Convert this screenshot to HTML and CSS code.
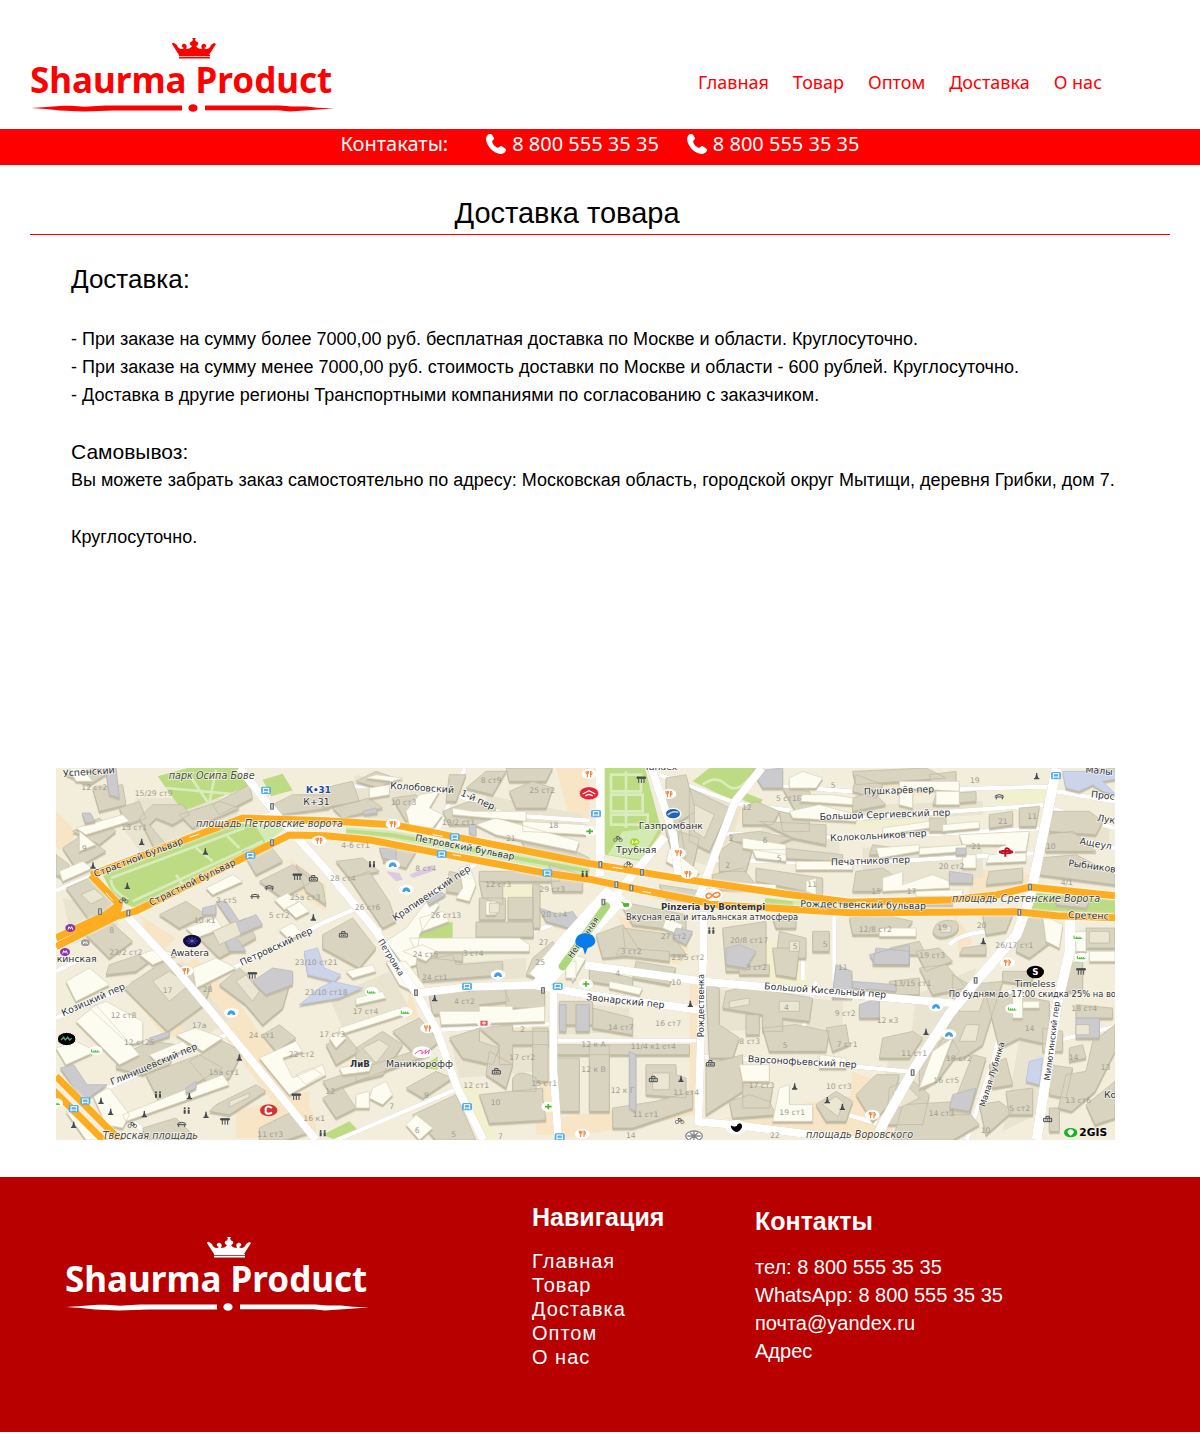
FILE: index.html
```html
<!DOCTYPE html>
<html lang="ru">
<head>
<meta charset="utf-8">
<meta name="viewport" content="width=device-width, initial-scale=1">
<title>Shaurma Product — Доставка товара</title>
<link rel="stylesheet" href="styles.css">
</head>
<body>
<svg class="sprite" aria-hidden="true">
  <symbol id="logo" viewBox="0 0 310 76">
    <g fill="currentColor">
      <path d="M142 6a1.500 1.500 0 0 1 2-1l3 2c1 4 5 5 7 3-4-1-2-5 1-4 2 1 2 3 1 5 3 0 5-1 6-3-3-1-3-4 0-4.500l1-2-1-1 2-1 2 1-1 1 1 2c3 .5 3 3.500 0 4.500 1 2 3 3 6 3-1-2-1-4 1-5 3-1 5 3 1 4 2 2 6 1 7-3l3-2 2 1-7 11h-30z"/>
      <path d="M149 17h31v1.200h-31zM149 19h31v1.500h-31z"/>
      <text class="logo-text" x="0" y="55">Shaurma Product</text>
      <path d="M1 70l12-.8 20-1.400h8l14 1 20-1.200h77v5H84l-30 1-24-1.200-14-1.500z"/>
      <path d="M175 67.500h75l12 1h14l12 1.300 16 .7-16 .9-10 .8-18 1.200-12-1.100h-73z"/>
      <ellipse cx="163" cy="70" rx="4.600" ry="3.800"/>
    </g>
  </symbol>
  <symbol id="phone" viewBox="0 0 20 20">
    <path fill="#fff" d="M3 0C1 .8-.5 4 .3 7c1.500 6 6.500 11 11.700 12.500 3 .8 6 .5 7.500-2 .7-1.200.7-2.200-.3-3l-3-2c-1-.7-2-.5-2.700.3-.7.900-1.500 1.200-2.500.6-2-1-4-3-4.700-5-.3-1 0-1.800.8-2.300 1-.7 1.200-1.700.6-2.700L6 .8C5.300-.2 4-.3 3 0z"/>
  </symbol>
</svg>

<header class="header">
  <a class="logo" href="#" aria-label="Shaurma Product"><svg><use href="#logo"/></svg></a>
  <nav class="menu">
    <a href="#">Главная</a>
    <a href="#">Товар</a>
    <a href="#">Оптом</a>
    <a href="#">Доставка</a>
    <a href="#">О нас</a>
  </nav>
</header>

<div class="bar">
  <span class="bar-label">Контакаты:</span>
  <a href="tel:88005553535"><svg><use href="#phone"/></svg>8 800 555 35 35</a>
  <a href="tel:88005553535"><svg><use href="#phone"/></svg>8 800 555 35 35</a>
</div>

<main>
  <h1 class="title">Доставка товара</h1>
  <section class="delivery">
    <h2>Доставка:</h2>
    <p>- При заказе на сумму более 7000,00 руб. бесплатная доставка по Москве и области. Круглосуточно.<br>
    - При заказе на сумму менее 7000,00 руб. стоимость доставки по Москве и области - 600 рублей. Круглосуточно.<br>
    - Доставка в другие регионы Транспортными компаниями по согласованию с заказчиком.</p>
    <h3>Самовывоз:</h3>
    <p>Вы можете забрать заказ самостоятельно по адресу: Московская область, городской округ Мытищи, деревня Грибки, дом 7.</p>
    <p>Круглосуточно.</p>
  </section>

  <svg class="map" viewBox="0 0 3177 1116" role="img" aria-label="Карта проезда">
    <defs>
      <g id="bus"><rect x="-15" y="-11" width="30" height="22" rx="5" fill="#55aee8"/><rect x="-8" y="-6" width="16" height="10" fill="none" stroke="#fff" stroke-width="3"/><path d="M-8 5v3M8 5v3" stroke="#fff" stroke-width="4"/></g>
      <g id="food"><ellipse rx="22" ry="15" fill="#fff"/><path d="M-9-9v7q4 4 8 0v-7M-5-9V10M5 10V-9q5 3 4 10H5" fill="none" stroke="#f47a2c" stroke-width="3"/></g>
      <g id="tree"><path d="M-8 10h16v-4H5L2-4V-9h-4v5L-5 6h-3z" fill="#444a50"/></g>
      <g id="light"><rect x="-6" y="-10" width="12" height="20" rx="2" fill="#777"/><path d="M0-7V7" stroke="#ddd" stroke-width="4"/></g>
      <g id="arch"><path d="M-13-8h26v4h-26zM-8-3v13M0-3v13M8-3v13" fill="#444a50" stroke="#444a50" stroke-width="3"/></g>
      <g id="house"><path d="M-12 8V-2h24V8zM-5-3V-8H5v5M-5 1v4M0 1v4M5 1v4" fill="none" stroke="#444a50" stroke-width="3"/></g>
      <g id="lime"><ellipse rx="21" ry="14" fill="#fff"/><path d="M-12-4v8H12M-5-1V4M0-1V4M6-1V4" fill="none" stroke="#3fbe26" stroke-width="3"/></g>
      <g id="hotel"><ellipse rx="22" ry="15" fill="#fff"/><path d="M-12 7q0-12 12-14 12 2 12 14H5q-5-8-10 0z" fill="#3f9fe6"/></g>
      <g id="cross"><ellipse rx="21" ry="15" fill="#fff"/><path d="M-10 0h20M0-8V8" stroke="#44bd23" stroke-width="5"/></g>
      <g id="bike"><path d="M-5-6h8l4 9M-5-6l5 9 6-6" fill="none" stroke="#555" stroke-width="3"/><circle cx="-8" cy="4" r="5" fill="none" stroke="#555" stroke-width="2"/><circle cx="8" cy="4" r="5" fill="none" stroke="#555" stroke-width="2"/></g>
      <g id="people"><path d="M-9 9V-3h6V9zM3 9V-3h6V9z" fill="#444a50"/><circle cx="-6" cy="-7" r="3" fill="#444a50"/><circle cx="6" cy="-7" r="3" fill="#444a50"/></g>
      <g id="bench"><path d="M-12-4Q0-10 12-4M-14 0h28M-9 0v7M9 0v7" fill="none" stroke="#444a50" stroke-width="3"/></g>
    </defs>
    <rect width="3177" height="1116" fill="#f2eedb"/>

    <!-- courtyards -->
    <g fill="#f8e5c6">
      <path d="M0 130l60 60-25 60-35-10zM700 270l110 80v80l-80-50zM250 440l110 70-60 60zM360 600l60-30 120 120 240 360 0 66-60-20-180-240zM200 650l120 150 100 20-50-60-120-100z"/>
      <path d="M1500 0h100v150h-60zM1720 70h60l40 130-20 70zM2030 100l30 20-90 270-30-30zM1600 340l340 50-30 30-160-40zM1680 440l120 40 100 60-30 50-120-30zM1260 690h120v40h-120zM1150 790h340v-30h-340z"/>
      <path d="M1060 660l30 90-40 10zM1480 700h20v400h-60v-50zM1500 1050l420-60v50l-420 76zM2000 1050l400-70 120 60-20 76h-120zM2390 910l100 40-60 90-50-40zM2740 300l180 20v50l-180 30zM2690 430l60 90-40 40z"/>
      <path d="M2400 20h200v60h-200zM1900 650h40v380h-40zM540 1030l220-60v90l-60 50h-160z"/>
    </g>
    <g fill="#f3f0cf"><path d="M2380 120l200-10v60l-200 10zM2840 60h140v60h-140zM1280 330h180v150h-180zM2130 520h120v140h-120zM1220 960l50-10 60 166h-40z"/></g>

    <!-- open yards between the blocks -->
    <g fill="#e9e4d0">
      <path d="M240 90l260 0 60 60-300 110-60-80zM20 390l110 20 60 60-140 60zM900 20l240 60-40 100-240-40zM1290 80l290 60v60l-280-40zM1860 60l130 10 60 60-60 170-130-30zM2120 170l230 30v90l-250-40zM2420 110l360-10v40l-360 20zM2420 240l360-10v100l-360 20zM2960 150l200 30v60l-210-20z"/>
      <path d="M220 640l160-60 140 180-100 60zM820 690l180-80 60 110-200 60zM1120 590l290-20v60l-290 20zM1180 800l280-20v130l-250 20zM1520 700l200 20v70l-200 10zM1960 660l400 40v80l-400 10zM2580 680l180-80-40 190-160 60zM2500 860l160-20-80 180-120 20zM2900 760l100 20-40 250-120 60z"/>
    </g>

    <!-- parks -->
    <g fill="#bddb83">
      <path d="M305 25l90-25h160l35 50-210 80zM620 35l60-18 30 50-65 18zM140 320L545 165l105 10-15 50-400 195-60-30z"/>
      <path d="M1647 0h120l50 190-60 90-110-20zM1910 40l50-40h145l-80 95zM2070 75l50 20-12 20-50-20zM1040 515l70-40 80-13v55zM1095 900l50-35v40zM2917 372l260 25v40l-260-10zM2127 390l90 10v22h-90zM800 1100l80-40 30 30-70 26z"/>
    </g>
    <g fill="#d3eab2">
      <path d="M590 160l100 20-60 45zM1700 190l110-10-55 95-100-15zM2210 397l370 5v22h-370zM870 177l140 12 590 108v30l-590-112-140-10z"/>
    </g>
    <path d="M870 190l140 12 590 108" fill="none" stroke="#bddb83" stroke-width="12"/>
    <g fill="none" stroke="#d9ecbb" stroke-width="8">
      <path d="M165 330l400-150M230 400L620 220M165 335q0 30 50 60M420 240l50 40M510 200l40 40M360 320l20 30M400 20l60 90M330 60l220 20M480 5l-20 100"/>
      <path d="M1665 20h90v50h-90zM1665 80h95v50h-95zM1665 140h110v30h-110zM1710 10v170M1940 50q40-30 70 0t70-20"/>
    </g>

    <!-- side streets -->
    <g class="road thin">
      <path d="M2117 51l280 20 585-15M2037 106l355 45 570-40M1997 196l395 15 560-30M1977 276l415 10 540-30M2980 66l197 35M2970 116l207 65M2950 191l227 50M2940 276l237 40"/>
      <path d="M0 368l110-46M420 656l380-191 102-44M0 751l350-155M120 976l400-180M962 491l300-205M792 55h200l180 15 180 71 250 17M1227 0l-85 191M1500 818h427M1142 786l350-20M1937 866l350 20 275 25M2862 666l-50 210-80 240M1210 960l-400 170M1400 500l150-50"/>
      <path d="M600 150l80-20M0 610l60-30M2240 546v90M2335 430v210M3042 560h135M1810 20l230 85M300 1116l-180-140M2680 530q40-40 140-40M2462 1066l-100-30M2280 640l-60 220M3010 816l167-40"/>
    </g>

    <!-- buildings -->
    <g class="b">
      <path d="M30 360l80-35 90 70-100 60zM20 240l60-40 70 50-90 50zM50 190l80-40 50 40-50 40zM110 60l90-10 10 60-80 20zM250 150l40-40h90l20 30-50 30-50-20-20 20 50 60-30 20zM370 140l120-40 60 20-140 60zM470 110l110-60 10 40-100 50zM310 440l80-40 60 40-80 40zM430 510l140-60 30 60-110 60zM560 250l80-20 40 50-80 40zM650 110l60-30h110v40l-150 20zM30 20l90-20h60l-80 50zM720 290l80 60 10 60-60-40zM0 260l40 30-20 40-20-10zM130 430l100 90-70 50-90-90zM190 120l60-20 20 50-60 20zM610 340l100-50 60 50-90 50z"/>
      <path d="M800 60l90-20 20 60-110 20zM900 40l60-30 60 20-50 30zM1010 90l70-10 30 50-60 30zM830 120l110-30 40 30-120 30zM1160 130l80-30 80 20-20 50h-120zM1230 60l60-50h60l-40 70zM1360 70l70-30 60 20-20 60h-90zM1350 0h140l-20 40h-110zM1390 200l150 40 60 30v20l-190-40zM1180 20h50l-30 80h-30zM840 280l80-10 50 40-90 20zM880 330l60-20 60 90 20 60-40 20zM1000 240l80 10-30 50-70-20zM1270 310h240v30h-240zM1270 340l70 10v60l-60-20zM1270 390h78v65h-78zM1356 388h76v66h-76zM1260 462h172v45h-172zM1430 350h22v130h-22zM1480 290l100 30v50h-90zM800 500l90-50 70 90-50 60-110-60zM1180 310l50 10v60l-60-10z"/>
      <path d="M1830 30l60-10 30 110-50 30 20 110-30 20-30-100zM1900 60l120 60-60 130-60-30zM1870 190l60 20-20 90-50-20zM1990 250l40-30 60 20-20 70h-80zM2060 120l40-20 70 30-20 40h-90zM2180 60l80 10 30 70-60 10zM2020 200l90-10 100 20-50 20-130-10zM2110 160l200 10v60l-100-20zM2170 130l90 20v40h-80zM2180 240l180 20v20l-200-10zM2100 300l200 30v50l-200-40zM1970 320l90-20 40 50h-130zM1690 400l200 40v50l-160-20zM1700 480l150 20 40 60-180 0zM1620 500l80-30 60 90-120 10zM2000 480l130-20v150h-120zM2150 450l70-10v40h-60zM2170 490l80 20v60h-90zM2270 490h50v60h-50zM1810 350l130 20v30l-110-10z"/>
      <path d="M2390 10l220-10 60 30-270 20zM2390 90l60-20 40 40-100 20zM2620 20l80-10v40l-70 10zM2640 80l120-10v30l-130 10zM2800 140l70-10v40l-70 10zM2890 120l60-5-10 60h-50zM2980 130l120 0 40 30-20 40-140-10zM2960 200l90-10 70 60-150 0zM2950 270l110-10 117 60v30l-227-30zM2400 20l80 30-20 40-70-20zM2450 230l70 10-10 20-70 0zM2400 310l80-10 60 40-80 30h-70zM2620 150l50 0v40h-50zM2800 310l100-10v40l-110 10zM2380 450l100-10 90 20-30 40-150 0zM2500 540l90-20 20 40h-100zM2780 440l90 0-20 50-60 10zM2900 460l50-20 50 70-80 60-40-20zM2640 470q20-20 60-10 20 20-10 40-50 20-60-10zM2720 540l70-10v30h-80zM2600 370l90 20v20h-90zM3090 0h87v30l-80-10zM3090 480h87v60h-87zM3000 390l100 10-10 20-90-10z"/>
      <path d="M205 660l130-90 130 80-20 60-110 80zM150 620l90-10 40-30-30-20-90 30zM190 860l100-40 70 10-20 60-80 30-80-20zM270 920l160-60 70 40-140 80-50 20zM400 880l100-60 60 30-40 80-60 20zM490 650l60-50 60 50 90 0-20 70-60 50-50-60zM620 800l50-30 50 40-60 40zM480 1010l120-60 30 20-110 70-60-10zM260 1080l100-30 60 60-150 6zM610 1080l100-50 60 60-80 26h-80zM440 590l40-10 0 40-40 10z"/>
      <path d="M900 840l80-50 60 40-60 90-80 20zM1010 790l80-40 60 70-60 50zM810 830l60-30 40 50-70 40zM800 940l300-100 20 20-300 110zM800 990l60-30 40 60-60 30zM1050 960l90-50 50 20-90 60zM1070 1040l130-60 60 136h-120zM1080 580l110-20 10 30 140-10v40l-250 20zM1120 680l60-10 70 0 90-20 20 50-90 10 10 20-150 10zM1350 660h116v60h-116zM1180 810l90-30v40l60 20-20 50-90-20zM1270 780l100-10v20h110v40l-110 0v60l-40 0v-60zM1300 850l70 40-20 70-60-40zM1430 780h46v160l-46 0zM1270 980l190-20v30l10 66-170 10zM1370 930q20-30 70 0v40h-70zM1120 570l60-30h40v40zM1430 570l60-50 20 30-70 80-30-10z"/>
      <path d="M1510 700h100v70h-100zM1600 600l130 30v30l-130-20zM1610 720l120 30v50l-120-20zM1740 580l120 20-20 50-110-20zM1500 830h400v30h-400zM1500 870h70v160h-70zM1600 830h60v200l-60 0zM1770 890l90 0v30l30 10v60l-120-10zM1800 1000l110-30v50l-180 60h-60v-60zM1950 890l110-30v110l-110 70zM2010 670l90-20 50 20 120 20-10 70-80-10v40h-60v-50l-120-20zM1950 650l40 10v110l60 40-20 60-70 0zM2070 740l40 0v60h-40zM2120 780l100-10 100 20-10 60-170 0zM2020 1000l60-20 60 20 20 40-130 10zM2060 950l90 10-10 60h-80zM2050 600l90-10v30h-90zM2150 540l80 0-10 90-60-10zM2310 780l60-10 10 60-50 20zM2280 1010l60-40 50 30-20 60-60 0zM1690 540l150 10v30l-160-20z"/>
      <path d="M2580 550l70-10 40 40-80 30zM2590 600l80-10 60 70-100 20zM2500 640l90-10v50l-90 0zM2690 620l50 30 100-10-60 190-60 40-90 0 60-120zM2790 680l80 0 110 20v130l-90-20-60 30zM2480 810l90-20 30 20-40 60-90 0zM2590 860l90-60 30 50-60 80-60 40zM2500 960l60-30 60 50-20 90h-110zM2540 1010l170-10 60 70-80 46h-180zM2750 860l40 10-50 170-60 0zM2800 890l50-20 20 80-60 10zM2850 970l80-10v80h-70zM2980 890l70 10-20 90-50-10zM2960 780l60 10v60h-60zM3020 590l60-10v90h-60zM3060 710l110 10v30h-110zM3030 920l60-10 20-90 67-50v80l-60 120-70 60-40-10zM3090 1010l87-70v110l-60 20zM2770 1010l60-10 40 30-80 70zM3040 840l40-10 10 40-50 10zM2400 980l60-60 70 0-20 80-60 60zM2980 1020l30 0v70h-30zM2840 610l100 0-20 40-80-10z"/>
    </g>
    <g class="b l">
      <path d="M60 180l140-40 20 20-130 40zM10 310l70-30 30 20-90 40zM450 360l80-40 30 20-90 40zM390 480l90-30 20 30-80 30zM655 395l40-20 30 30-40 20zM690 420l40-20 30 30-40 20zM670 485l40-20 30 30-40 20zM70 190l50 40-50 20zM40 0l40 0 30 40-50 0z"/>
      <path d="M940 60l60-10v30l-60 10zM1050 130l40-50 60-10-30 50 40 20-30 40-70-10zM1190 120l60 10 160 0v30l-220-20zM1260 170l60-20 250 70-10 30-240-50zM1400 160l190 10v30l-190-10zM960 20l80 10-30 10-80-10zM990 520l60-40 70-90 30 20-60 90-10 90-30 10zM1060 510h330l30 20v20h-340zM1090 450l70-20 20 30-80 30zM1210 300l30-10 20 60-20 50-40-10 20-30z"/>
      <path d="M2200 30l40-20 60 20-20 30h-80zM2240 80l90 0 60 10v20l-160-10zM2200 130l90-20 110 30v20l-190-10zM2060 210l130 20v30l-130-20zM2090 245l100 0v35l-90-10zM2220 280h170v25h-170zM1960 340l200 10 0 20-200-10zM1840 240l90 70-10 20-90-50zM2250 340l30-10v50l-30-10z"/>
      <path d="M2530 40l180 0v30l-180-10zM2640 70l70 0v40h-70zM2530 70l40 0v50l-40-10zM2480 180l140-20v20l-140 20zM2660 170l110-10v20l-110 10zM2710 200l210-10-10 60-60 0v-20l-130 0zM2590 240l140-10v20l-140 10zM2460 240l130-10v20l-120 20zM2720 260h40v40h-40zM2800 260l110-5v25l-120 5zM2480 330l60-20 0 40 90-30 50 20v20l-200 10zM2580 370l140-5v20h-140zM2470 480l110 0v25h-110zM2960 440l60 30-10 70-40-20zM3060 490h30v60h-30z"/>
      <path d="M30 640l70-40 60 50-100 50zM60 760l60-50 130 150-60 30zM100 720l50-20 110 60v60l-40 10zM410 600l70-30 60 30-120 60zM250 560l60-20 50 20-70 30zM360 800l60-20 80 30-60 40zM280 860l100-40 20 20-100 40zM110 980l50-20 60 80-20 40-50-10zM200 1040l300-120 20 30-310 110zM0 840l60-20 60 30-90 40zM610 870l110-50 20 30-60 20 30 60 90-40 10 30-110 60zM720 920l50-20 30 20-50 30zM30 1030l60 30 60 56h-60z"/>
      <path d="M870 610l80-20 10 20-70 20zM900 690l80-20 10 20-90 20zM850 780l180-60 10 20-190 60zM820 810l30-20 20 20-30 30zM850 900l100-20-10 30-80 10zM950 960l40-20 20 40-30 30-40-20zM900 980l40-10v50h-40zM1050 1070l30-30 50 40-40 36zM990 580l60 0 60 80-20 20-60-30zM1040 550l70 30 30-30-40-20zM1150 730l120 0v-15h60l40 0v10l96-10v45l-310 10zM1290 400l30 0v40h-30zM1530 580l20-20 40 10-40 70z"/>
      <path d="M1530 580h30v50h-30zM1660 640l100 20-10 20-90-20zM2050 890l90 0v50h-80zM2170 960l30-10 0 60h70v50l-120 0zM2290 860l80 10v30l-80 0zM1830 450l50 20-10 30-50-20zM2870 660l30 0v90h-30zM2900 700h50v20h-50zM2630 850l60-40-50 130-50 20zM3100 550h77v30h-77z"/>
    </g>
    <g class="b g">
      <path d="M78 135l25 0 15 25-30 5zM150 10l30-10 10 90-30-10zM480 400l30 0 40 60 50-20 20 30-70 30zM440 420l40-10v30h-40zM500 500l30-10 40 60h-50zM13 900l40-10 40 60 60 0-70 50zM590 640l60-40 60 10v40l-80 30zM280 810l60-20v15l-60 20zM390 960l30-20v20l-30 15z"/>
      <path d="M920 130l40-10 5 15-40 5zM970 240h50v40l-40-10zM1110 390l40-20 20 10-50 30zM1240 170l20 0v35l-20-10zM1450 420l60 20 40-10 20 30-30 20-70-20zM1860 480l50 10-20 40-40-20zM2010 540l40-10 50 20-30 50-60-10zM2090 10l90-10v60l-60 0zM1510 710h20v80h-20zM1560 710h40v80h-40zM1720 850l20 10v170l-20-10zM2390 640l130 10v20l-130-10zM2440 560l120-30v60h-100zM2410 710l60-20v60h-60zM2680 310l70 10v25h-70zM2700 240l30 0v20h-30zM2690 980l70-20-20 70-60-10zM3060 750l70 0v60h-70zM2460 540l100 10v40h-110zM2340 590l48 20v80h-60z"/>
    </g>
    <path class="b v" d="M745 550l40-10 20 60 50 20-20 20-80-20zM730 710l120-20 70-30-90-20-40 20zM3020 10h180v20l-60 10 40 40-40-10-30-20-40 20-40-10zM2920 880l40-10-10 80-40-10z"/>
    <path fill="#dcc9e4" d="M1060 320l50-20 20-10v20l-60 20zM990 310l40 5 10 20-20 5z"/>
    <g class="yard">
      <path d="M75 380l40-18 30 26-40 20zM470 490l70-30 15 40-65 30zM290 640l50-30 60 40-60 50zM540 640l30-20 40 50-20 30zM920 840l50-25 30 20-40 50zM1300 405h30v30h-30zM1915 110l60 30-30 70-30-20zM2200 520h30v30h-30zM2020 700l60-10v20l-60 10zM2170 700h60v30h-60zM1790 915h50v50h-50zM2300 1010l40-25 25 20-20 40zM2720 670l70 0-20 60-60 0zM2730 770l40 0-10 50-50 0zM2510 970l40-20 40 40-60 30zM3060 770h40v30h-40zM3100 490h60v35h-60zM2655 475h30v18h-30zM520 1000l60-25v12l-60 30z"/>
    </g>

    <!-- main streets -->
    <g class="road">
      <path d="M550 0l120 150 140 155 152 186 38 69 82 116 60 110 60 170 80 160M210 441l140 150 170 205 180 220 80 100"/>
      <path d="M1632 0v325M1787 0l65 200 15 121M1827 206l-160 189M2117 0l-80 101-110 290M1942 431v115l-15 515 110 10 360 45M1082 676l160-20 190-5 170 30 330 45M1492 656v250l15 210M1587 591l360 50 340 30 405 35"/>
      <path class="wide" d="M3002 0l-80 391-40 109-110 126-90 110-110 170-90 160-20 50M1700 380L1587 480 1440 650M3042 450v96l-40 170-60 400"/>
    </g>
    <path d="M1680 380L1560 510 1450 640" fill="none" stroke="#fff" stroke-width="74"/>
    <path d="M1650 415l-130 180" fill="none" stroke="#aed67b" stroke-width="24" stroke-linecap="round"/>
    <g class="avenue">
      <path d="M105 321L560 150l250 8 202 12 590 117 265 44 320 47 195 25 300-7 140-15 100-24 255 26"/>
      <path d="M0 536l180-90 60-17L700 201l110 2 132 13 210 40 320 60 130 18 155 32 230 45 395 23 500-3 120 12 175 6M105 321l85 89-10 36M0 510l150-70 40-30"/>
      <path d="M0 925l200 200M-20 955l180 180"/>
    </g>
    <g fill="none" stroke="#fff" stroke-width="3"><path d="M400 208l30-10M1130 200l30 5M1190 260l25 4M1670 298l30 4M1760 370l25 5M2400 403l30-1M150 375l20 22"/></g>

    <!-- street names -->
    <g class="street">
      <text x="22" y="26" transform="rotate(-4 22 26)">Успенский</text>
      <text x="118" y="328" transform="rotate(-21 118 328)">Страстной бульвар</text>
      <text x="285" y="414" transform="rotate(-26 285 414)">Страстной бульвар</text>
      <text x="1002" y="62" transform="rotate(4 1002 62)">Колобовский</text>
      <text x="1212" y="82" transform="rotate(24 1212 82)">1-й пер</text>
      <text x="1076" y="218" transform="rotate(11 1076 218)">Петровский бульвар</text>
      <text x="1018" y="460" transform="rotate(-34 1018 460)">Крапивенский пер</text>
      <text x="557" y="594" transform="rotate(-25 557 594)">Петровский пер</text>
      <text x="22" y="745" transform="rotate(-24 22 745)">Козицкий пер</text>
      <text x="168" y="952" transform="rotate(-23 168 952)">Глинищевский пер</text>
      <text x="1590" y="696" transform="rotate(6 1590 696)">Звонарский пер</text>
      <text x="2124" y="664" transform="rotate(4 2124 664)">Большой Кисельный пер</text>
      <text x="2075" y="882" transform="rotate(3 2075 882)">Варсонофьевский пер</text>
      <text x="2424" y="80" transform="rotate(-2 2424 80)">Пушкарёв пер</text>
      <text x="2291" y="156" transform="rotate(-2 2291 156)">Большой Сергиевский пер</text>
      <text x="2323" y="220" transform="rotate(-3 2323 220)">Колокольников пер</text>
      <text x="2325" y="292" transform="rotate(-2 2325 292)">Печатников пер</text>
      <text x="2233" y="417" transform="rotate(1 2233 417)">Рождественский бульвар</text>
      <text x="3036" y="450" transform="rotate(2 3036 450)">Сретенс</text>
      <text x="3088" y="14" transform="rotate(5 3088 14)">Малы</text>
      <text x="3104" y="88" transform="rotate(6 3104 88)">Прос</text>
      <text x="3122" y="158" transform="rotate(10 3122 158)">Лук</text>
      <text x="3070" y="228" transform="rotate(10 3070 228)">Ащеул</text>
      <text x="3036" y="294" transform="rotate(8 3036 294)">Рыбников</text>
      <text x="3144" y="990">Ко</text>
      <text x="1765" y="6">Yandex</text>
      <text x="2" y="583">кинская</text>
      <text x="344" y="564">Awatera</text>
      <text x="990" y="898">Маникюрофф</text>
      <text x="1748" y="184">Газпромбанк</text>
      <text x="1680" y="256">Трубная</text>
      <text x="742" y="112">К+31</text>
      <text x="2876" y="657">Timeless</text>
    </g>
    <g class="street narrow">
      <text x="965" y="520" transform="rotate(58 965 520)">Петровка</text>
      <text x="1945" y="808" transform="rotate(-90 1945 808)">Рождественка</text>
      <text x="2787" y="1018" transform="rotate(-73 2787 1018)">Малая Лубянка</text>
      <text x="2982" y="938" transform="rotate(-83 2982 938)">Милютинский пер</text>
      <text x="1548" y="572" transform="rotate(-55 1548 572)">Неглинная</text>
      <text x="2678" y="686">По будням до 17:00 скидка 25% на во</text>
      <text x="1710" y="455">Вкусная еда и итальянская атмосфера</text>
    </g>
    <g class="street strong"><text x="1815" y="426">Pinzeria by Bontempi</text><text x="882" y="898">ЛиВ</text><text x="750" y="76" fill="#174a9b">К•31</text></g>
    <g class="street place">
      <text x="338" y="32">парк Осипа Бове</text>
      <text x="420" y="177">площадь Петровские ворота</text>
      <text x="2688" y="401">площадь Сретенские Ворота</text>
      <text x="2250" y="1110">площадь Воровского</text>
      <text x="140" y="1114">Тверская площадь</text>
    </g>
    <g class="number">
      <text x="76" y="66">12 ст2</text><text x="236" y="84">15/29 ст9</text><text x="196" y="186">13 ст1</text><text x="78" y="248">9</text><text x="480" y="404">3 ст5</text><text x="638" y="451">5 ст2</text><text x="414" y="464">10 к1</text><text x="702" y="397">25а ст3</text><text x="160" y="496">8</text><text x="160" y="562">23/2 ст2</text>
      <text x="1004" y="112">10 ст3</text><text x="1158" y="172">19/2 ст1</text><text x="1274" y="46">8 ст9</text><text x="1420" y="74">25 ст2</text><text x="1478" y="180">18</text><text x="1350" y="220">21</text><text x="856" y="239">4-6 ст1</text><text x="1078" y="308">8 ст4</text><text x="822" y="340">28 ст4</text><text x="896" y="425">26 ст6</text><text x="1288" y="356">12 ст3</text><text x="1450" y="371">29 ст3</text><text x="1456" y="446">20 ст4</text><text x="1124" y="451">26 ст13</text><text x="1448" y="530">27</text>
      <text x="2058" y="127">12</text><text x="2160" y="100">5 ст1Б</text><text x="2324" y="60">5</text><text x="2018" y="220">2</text><text x="2120" y="226">6</text><text x="2162" y="280">5</text><text x="2008" y="300">2</text><text x="2254" y="356">11</text><text x="1814" y="513">27 ст2</text><text x="2022" y="525">20/8 ст17</text><text x="2210" y="542">5</text><text x="2300" y="537">5</text><text x="1694" y="558">3 ст2</text>
      <text x="2742" y="44">19</text><text x="2826" y="169">21</text><text x="2914" y="152">11</text><text x="2746" y="243">21</text><text x="2970" y="242">10</text><text x="2648" y="303">20 ст2</text><text x="2446" y="378">15</text><text x="2552" y="377">17</text><text x="3014" y="352">4/1</text><text x="2408" y="491">12/8 ст2</text><text x="2644" y="487">19</text><text x="2762" y="481">20</text><text x="2818" y="541">26/17 ст1</text>
      <text x="320" y="676">17</text><text x="440" y="672">28</text><text x="164" y="751">12 ст8</text><text x="408" y="780">17а</text><text x="204" y="831">12 ст25</text><text x="578" y="810">24 ст1</text><text x="698" y="868">22 ст2</text><text x="458" y="920">15а ст1</text><text x="604" y="1106">11 ст3</text><text x="742" y="1058">16 к1</text><text x="716" y="592">23/10 ст21</text><text x="746" y="682">23/10 ст18</text>
      <text x="1070" y="568">24 ст5</text><text x="1220" y="565">3 ст4</text><text x="1098" y="637">24 ст1</text><text x="1194" y="708">4 ст2</text><text x="890" y="739">17 ст4</text><text x="790" y="807">17 ст3</text><text x="1438" y="592">25</text><text x="1392" y="792">2</text><text x="1360" y="877">17 ст2</text><text x="1222" y="961">12 ст1</text><text x="1426" y="953">15 ст1</text><text x="1304" y="1012">10</text><text x="1104" y="989">9</text><text x="1000" y="1022">7</text><text x="1076" y="1096">6</text><text x="1186" y="1106">5</text><text x="1326" y="1112">7</text><text x="808" y="977">12</text>
      <text x="1846" y="577">23/5 ст2</text><text x="2070" y="606">3 ст2</text><text x="1846" y="650">10</text><text x="1678" y="624">4</text><text x="1656" y="785">14 ст7</text><text x="1798" y="774">16 ст7</text><text x="1724" y="843">11/4 к1 ст4</text><text x="1576" y="838">12 к А</text><text x="1576" y="911">12 к В</text><text x="1664" y="975">12 к Г</text><text x="1852" y="980">11 ст4</text><text x="1730" y="1047">11 ст1</text><text x="1710" y="1111">14</text><text x="2142" y="1111">22</text><text x="2184" y="725">4</text><text x="2050" y="829">8 ст3</text><text x="2180" y="840">5</text><text x="2078" y="961">17 ст3</text><text x="2170" y="1041">19 ст1</text><text x="2336" y="745">9 ст2</text><text x="2342" y="836">7 ст1</text><text x="2310" y="962">10 ст3</text><text x="2346" y="606">11</text>
      <text x="2590" y="570">19 ст3</text><text x="2512" y="653">13/15 ст1</text><text x="2462" y="765">12 к3</text><text x="2536" y="864">11 ст1</text><text x="2670" y="878">18 ст2</text><text x="2632" y="946">16 ст5</text><text x="2618" y="1043">14 ст3</text><text x="2906" y="790">14</text><text x="3046" y="728">18 ст4</text><text x="3038" y="876">14</text><text x="2860" y="1030">5 ст2</text><text x="2774" y="1096">10</text><text x="3028" y="1005">13 ст6</text><text x="3134" y="905">13</text>
    </g>

    <!-- places -->
    <g>
      <use href="#bus" x="630" y="67"/><use href="#bus" x="583" y="262"/><use href="#bus" x="1196" y="207"/><use href="#bus" x="1157" y="258"/><use href="#bus" x="1474" y="315"/><use href="#bus" x="1620" y="137"/><use href="#bus" x="3000" y="23"/><use href="#bus" x="88" y="999"/><use href="#bus" x="53" y="1022"/><use href="#bus" x="1233" y="655"/><use href="#bus" x="1505" y="655"/><use href="#bus" x="1233" y="1016"/><use href="#bus" x="1511" y="1107"/>
      <use href="#food" x="789" y="218"/><use href="#food" x="1011" y="168"/><use href="#food" x="1599" y="18"/><use href="#food" x="1839" y="78"/><use href="#food" x="1868" y="255"/><use href="#food" x="1896" y="318"/><use href="#food" x="390" y="609"/><use href="#food" x="1115" y="781"/><use href="#food" x="1579" y="1097"/><use href="#food" x="2854" y="584"/><use href="#food" x="2449" y="1041"/>
      <use href="#tree" x="257" y="221"/><use href="#tree" x="448" y="250"/><use href="#tree" x="214" y="353"/><use href="#tree" x="111" y="292"/><use href="#tree" x="772" y="448"/><use href="#tree" x="550" y="868"/><use href="#tree" x="400" y="984"/><use href="#tree" x="135" y="998"/><use href="#tree" x="164" y="1031"/><use href="#tree" x="265" y="1038"/><use href="#tree" x="450" y="1040"/><use href="#tree" x="53" y="1070"/><use href="#tree" x="1136" y="690"/><use href="#tree" x="1903" y="707"/><use href="#tree" x="1875" y="932"/><use href="#tree" x="2216" y="955"/><use href="#tree" x="2314" y="996"/><use href="#tree" x="2359" y="1016"/><use href="#tree" x="2610" y="791"/><use href="#tree" x="2782" y="519"/><use href="#tree" x="2942" y="24"/>
      <use href="#light" x="648" y="115"/><use href="#light" x="648" y="224"/><use href="#light" x="132" y="431"/><use href="#light" x="217" y="435"/><use href="#light" x="1633" y="289"/><use href="#light" x="1758" y="313"/><use href="#light" x="1681" y="350"/><use href="#light" x="1726" y="360"/><use href="#light" x="1642" y="402"/><use href="#light" x="2922" y="357"/><use href="#light" x="2890" y="433"/><use href="#light" x="1080" y="674"/><use href="#light" x="1461" y="667"/><use href="#light" x="2759" y="637"/><use href="#light" x="2570" y="914"/>
      <use href="#arch" x="724" y="326"/><use href="#arch" x="589" y="622"/><use href="#arch" x="721" y="986"/><use href="#arch" x="507" y="1060"/><use href="#arch" x="1756" y="35"/><use href="#arch" x="3075" y="610"/>
      <use href="#house" x="772" y="331"/><use href="#house" x="862" y="499"/><use href="#house" x="1321" y="910"/><use href="#house" x="1792" y="933"/><use href="#house" x="1963" y="886"/><use href="#house" x="2975" y="1053"/>
      <use href="#hotel" x="526" y="734"/><use href="#hotel" x="1051" y="365"/><use href="#hotel" x="1326" y="620"/><use href="#hotel" x="2640" y="715"/><use href="#hotel" x="2679" y="799"/><use href="#hotel" x="1010" y="290"/>
      <use href="#lime" x="119" y="848"/><use href="#lime" x="947" y="671"/><use href="#lime" x="1048" y="732"/><use href="#lime" x="2869" y="722"/><use href="#lime" x="3066" y="507"/><use href="#lime" x="3076" y="568"/><use href="#lime" x="0" y="1005"/>
      <use href="#cross" x="1601" y="190"/><use href="#cross" x="1590" y="648"/><use href="#cross" x="1477" y="1016"/>
      <use href="#bike" x="203" y="396"/><use href="#bike" x="229" y="1070"/><use href="#bike" x="1686" y="212"/><use href="#bike" x="1717" y="288"/><use href="#bike" x="1871" y="1058"/>
      <use href="#people" x="948" y="289"/><use href="#people" x="1586" y="318"/><use href="#people" x="392" y="1028"/><use href="#people" x="1966" y="488"/><use href="#people" x="800" y="1096"/><use href="#people" x="306" y="980"/>
      <use href="#bench" x="640" y="360"/><use href="#bench" x="597" y="386"/><use href="#bench" x="377" y="1070"/><use href="#bench" x="2830" y="87"/>
    </g>
    <g fill="#8a35ad"><ellipse cx="43" cy="480" rx="15" ry="12"/><ellipse cx="27" cy="552" rx="15" ry="12"/><ellipse cx="88" cy="524" rx="13" ry="10" fill="#999"/></g>
    <g fill="none" stroke="#fff" stroke-width="3"><path d="M36 485l3-9 4 6 4-6 3 9M20 557l3-9 4 6 4-6 3 9M82 528l2-7 4 5 4-5 2 7"/></g>
    <ellipse cx="408" cy="519" rx="27" ry="19" fill="#120d3d"/>
    <g stroke="#3b49c8" stroke-width="3"><path d="M390 519h36M408 507v24M396 510l24 18M420 510l-24 18"/></g>
    <circle cx="408" cy="519" r="4" fill="#c33cb0"/>
    <ellipse cx="32" cy="813" rx="28" ry="20" fill="#000" stroke="#fff" stroke-width="3"/><path d="M15 816l8-8 5 8 7-8 6 8 6-5" fill="none" stroke="#5da789" stroke-width="4"/>
    <ellipse cx="638" cy="1027" rx="26" ry="18" fill="#cf3436"/><path d="M648 1020q-14-9-19 1v12q6 8 19 1" fill="none" stroke="#fff" stroke-width="6"/>
    <ellipse cx="1599" cy="76" rx="29" ry="20" fill="#e52431" stroke="#fff" stroke-width="2"/><path d="M1580 78l19-10 19 10M1588 84q11-9 22 0" fill="none" stroke="#fff" stroke-width="4"/>
    <ellipse cx="1851" cy="137" rx="26" ry="18" fill="#fff"/><ellipse cx="1851" cy="137" rx="21" ry="14" fill="#2463af"/><path d="M1835 141q14-14 32-8" fill="none" stroke="#b9d5f3" stroke-width="5"/>
    <ellipse cx="1736" cy="222" rx="14" ry="11" fill="#a5d518"/><path d="M1729 227v-9l7 6 7-6v9" fill="none" stroke="#fff" stroke-width="3"/>
    <ellipse cx="1971" cy="380" rx="29" ry="19" fill="#fff"/><path d="M1985 387q-8 4-17-6-8-8-15-3-6 7 1 12 7 4 14-7 8-12 20-9 9 6-3 13z" fill="none" stroke="#f38a3a" stroke-width="5"/>
    <ellipse cx="1708" cy="411" rx="20" ry="14" fill="#fff"/><path d="M1697 403h4l3 12h13l2-8h-17" fill="#44bd23" stroke="#44bd23" stroke-width="3"/>
    <ellipse cx="2850" cy="252" rx="27" ry="19" fill="#fff"/><path d="M2829 252q21-8 42 0M2829 252q21 8 42 0M2848 266v-20q0-7 8-4 8 4 3 11" fill="none" stroke="#c70f1b" stroke-width="6"/>
    <ellipse cx="2938" cy="612" rx="26" ry="19" fill="#000"/><text class="timeless" x="2938" y="621">S</text>
    <ellipse cx="1098" cy="853" rx="29" ry="18" fill="#fff"/><path d="M1077 858q16-16 22-9l-2 9 13-13-3 13 13-13-3 13" fill="none" stroke="#ee4d9b" stroke-width="3"/>
    <ellipse cx="1284" cy="765" rx="21" ry="14" fill="#fff"/><path d="M1273 758h22v15h-22z" fill="#e65959"/><path d="M1278 765h12M1284 760v10" stroke="#fff" stroke-width="3"/>
    <ellipse cx="2041" cy="1078" rx="31" ry="22" fill="#fff"/><path d="M2024 1072q10 6 18 2 2-8 10-8 8 4 6 12-6 14-18 14-14-4-16-20z"/>
    <g fill="none" stroke="#888" stroke-width="4"><ellipse cx="1914" cy="1104" rx="25" ry="15" fill="#fff"/><path d="M1894 1104h40M1914 1090v26M1902 1094l24 20M1926 1094l-24 20"/></g>
    <path d="M1587 560l-6-20q-25-6-23-23 5-21 30-21t30 21q1 17-23 23z" fill="#087ce8"/>
    <ellipse cx="3044" cy="1094" rx="20" ry="14" fill="#18b324"/><path d="M3034 1091q10-14 20 0-2 8-10 12-8-4-10-12z" fill="#fff"/>
    <text class="brand" x="3070" y="1105">2GIS</text>
  </svg>
</main>

<footer class="footer">
  <a class="logo" href="#" aria-label="Shaurma Product"><svg><use href="#logo"/></svg></a>
  <nav class="footer-nav">
    <h2>Навигация</h2>
    <a href="#">Главная</a>
    <a href="#">Товар</a>
    <a href="#">Доставка</a>
    <a href="#">Оптом</a>
    <a href="#">О нас</a>
  </nav>
  <address class="footer-contacts">
    <h2>Контакты</h2>
    <span>тел: 8 800 555 35 35</span>
    <span>WhatsApp: 8 800 555 35 35</span>
    <span>почта@yandex.ru</span>
    <span>Адрес</span>
  </address>
</footer>
</body>
</html>
```
FILE: styles.css
```css
* {
  box-sizing: border-box;
}

body {
  margin: 0 0 8px;
  background: #fff;
  color: #000;
  font-family: "Liberation Sans", Arial, sans-serif;
}

h1, h2, h3, p {
  margin: 0;
  font-weight: 400;
}

a {
  color: inherit;
  text-decoration: none;
}

svg {
  display: block;
}

.sprite {
  position: absolute;
  width: 0;
  height: 0;
}

.logo svg {
  width: 310px;
  height: 76px;
}

.logo-text {
  font: 700 35px "Noto Sans", Tahoma, sans-serif;
}

/* Header */

.header {
  display: flex;
  flex-wrap: wrap;
  align-items: flex-start;
  justify-content: space-between;
  padding: 38px 98px 15px 30px;
  color: #f00;
}

.menu {
  display: flex;
  gap: 24px;
  padding-top: 32px;
  font: 18px/24px "Noto Sans", Tahoma, sans-serif;
}

.bar {
  display: flex;
  justify-content: center;
  gap: 28px;
  padding: 3px 16px 9px;
  background: #f00;
  color: #fff;
  font: 20px/24px "Noto Sans", Tahoma, sans-serif;
}

.bar-label {
  margin-right: 10px;
}

.bar a {
  display: flex;
  align-items: center;
  gap: 6px;
}

.bar svg {
  width: 20px;
  height: 20px;
}

/* Delivery terms */

.title {
  margin: 0 30px;
  padding: 32px 66px 5px 0;
  border-bottom: 1px solid #f00;
  font-size: 29px;
  line-height: 32px;
  text-align: center;
}

.delivery {
  min-height: 533px;
  padding: 28px 71px 0;
  font-size: 18px;
  line-height: 28px;
}

.delivery h2 {
  margin-bottom: 30px;
  font-size: 26px;
  line-height: 32px;
}

.delivery h3 {
  margin-top: 28px;
  font-size: 21px;
  line-height: 29px;
}

.delivery p + p {
  margin-top: 29px;
}

/* Map */

.map {
  width: auto;
  margin: 0 85px 37px 56px;
}

.road {
  fill: none;
  stroke: #fff;
  stroke-width: 24;
  stroke-linejoin: round;
  filter: drop-shadow(0 0 2px #bbb8aa);
}

.road.thin {
  stroke-width: 13;
}

.road .wide {
  stroke-width: 30;
}

.avenue {
  fill: none;
  stroke: #ffad20;
  stroke-width: 21;
  stroke-linejoin: round;
  filter: drop-shadow(0 0 4px #fff);
}

.b {
  fill: #d9d4bf;
  stroke: #bdb7a0;
  stroke-width: 2;
  filter: drop-shadow(0 7px 0 #c2bca5);
}

.b.l {
  fill: #fdfcf1;
  stroke: #d6d1bc;
}

.b.g {
  fill: #cbcbce;
  stroke: #b2b2b7;
}

.b.v {
  fill: #ccd4ea;
  stroke: #b4bedc;
}

.yard {
  fill: #ebe6d2;
  stroke: #bdb7a0;
  stroke-width: 2;
}

.street {
  fill: #303438;
  stroke: #fff;
  stroke-width: 5;
  stroke-opacity: .7;
  paint-order: stroke;
  font: 28px "DejaVu Sans", sans-serif;
}

.street.narrow {
  font-size: 25px;
}

.street.strong {
  font-size: 26px;
  font-weight: 700;
}

.street.place {
  fill: #4a4a42;
  font-size: 29px;
  font-style: italic;
}

.number {
  fill: #a09d94;
  font: 23px "DejaVu Sans", sans-serif;
}

.timeless {
  fill: #fff;
  font: 700 26px "DejaVu Sans", sans-serif;
  text-anchor: middle;
}

.brand {
  font: 700 32px "DejaVu Sans", sans-serif;
}

/* Footer */

.footer {
  display: grid;
  grid-template-columns: 467fr 223fr 415fr;
  align-items: start;
  min-height: 255px;
  padding: 24px 30px 24px 65px;
  background: #b80000;
  color: #fff;
  font-size: 20px;
}

.footer .logo {
  padding-top: 36px;
}

.footer h2 {
  font-size: 25px;
  font-weight: 700;
  line-height: 32px;
}

.footer-nav {
  display: grid;
  line-height: 24px;
  letter-spacing: 1px;
}

.footer-nav h2 {
  margin-bottom: 16px;
  letter-spacing: 0;
}

.footer-contacts {
  display: grid;
  padding-top: 4px;
  font-style: normal;
  line-height: 28px;
}

.footer-contacts h2 {
  margin-bottom: 16px;
}
```
